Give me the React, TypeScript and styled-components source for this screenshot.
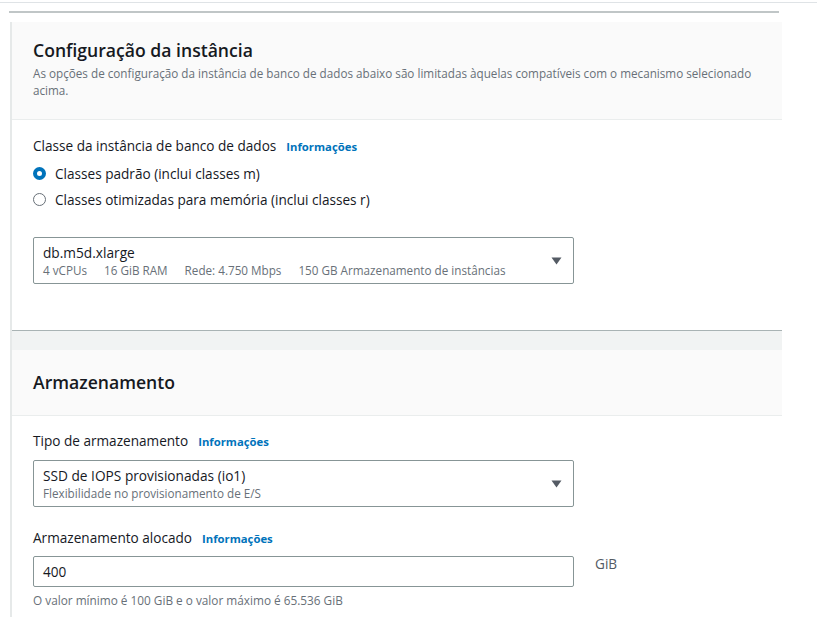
import React from "react";
import styled, { createGlobalStyle } from "styled-components";

const Global = createGlobalStyle`
  html, body { margin: 0; padding: 0; background: #ffffff; }
  body { font-family: "Open Sans", "Noto Sans", sans-serif; color: #16191f; }
  * { box-sizing: border-box; }
`;

const Page = styled.div`
  width: 817px;
  height: 617px;
  overflow: hidden;
  display: flex;
  flex-direction: column;
  & > * { flex-shrink: 0; }
`;

const TopRule = styled.div`
  margin-top: 2px;
  height: 1px;
  width: 100%;
  background: #dfe3e6;
`;

const PrevCardEdge = styled.div`
  margin: 8px 0 0 9px;
  width: 770px;
  height: 2px;
  background: #c0c6c7;
`;

const Column = styled.div`
  margin: 9px 0 0 10px;
  width: 772px;
  display: flex;
  flex-direction: column;
  border-left: 2px solid #e6e9e9;
  & > * { flex-shrink: 0; }
`;

const Card = styled.section<{ $closed?: boolean }>`
  display: flex;
  flex-direction: column;
  background: #ffffff;
  border-bottom: ${(p) => (p.$closed ? "1px solid #a9b3b4" : "none")};
`;

const CardHeader = styled.header<{ $pt: number; $pb: number }>`
  background: #fafafa;
  border-bottom: 1px solid #eaeded;
  padding: ${(p) => p.$pt}px 20px ${(p) => p.$pb}px 21px;
`;

const Title = styled.h2`
  margin: 0;
  font-size: 17.6px;
  line-height: 22px;
  font-weight: 600;
  color: #16191f;
`;

const Description = styled.p`
  margin: 4px 0 0;
  font-size: 11.7px;
  line-height: 17px;
  color: #687078;
  max-width: 735px;
`;

const CardBody = styled.div<{ $pt: number; $pb: number }>`
  padding: ${(p) => p.$pt}px 20px ${(p) => p.$pb}px 21px;
  display: flex;
  flex-direction: column;
`;

const Gap = styled.div`
  height: 19px;
  background: #f1f3f3;
`;

const FieldLabel = styled.div`
  display: flex;
  align-items: baseline;
  gap: 10px;
  font-size: 13.6px;
  line-height: 20px;
  color: #16191f;
`;

const InfoLink = styled.a`
  font-size: 11.3px;
  font-weight: 700;
  color: #0073bb;
  text-decoration: none;
`;

const RadioGroup = styled.div`
  display: flex;
  flex-direction: column;
  margin-top: 3px;
`;

const RadioRow = styled.label`
  display: flex;
  align-items: center;
  gap: 9px;
  height: 26px;
  font-size: 13.6px;
  color: #16191f;
`;

const RadioDot = styled.span<{ $checked?: boolean }>`
  width: 13px;
  height: 13px;
  border-radius: 50%;
  flex: none;
  border: ${(p) => (p.$checked ? "4px solid #0073bb" : "1px solid #687078")};
  background: #ffffff;
`;

const SelectBox = styled.div<{ $mt: number }>`
  margin-top: ${(p) => p.$mt}px;
  width: 541px;
  height: 47px;
  border: 1px solid #879596;
  border-radius: 2px;
  display: flex;
  align-items: center;
  padding: 0 10px 0 9px;
`;

const SelectText = styled.div`
  flex: 1;
  display: flex;
  flex-direction: column;
`;

const SelectMain = styled.div`
  font-size: 13.7px;
  line-height: 19px;
  color: #16191f;
`;

const SelectSub = styled.div`
  display: flex;
  gap: 17px;
  font-size: 11.7px;
  line-height: 17px;
  color: #687078;
`;

const Caret = styled.svg`
  width: 11px;
  height: 8px;
  margin-right: 1px;
  flex: none;
`;

const InputRow = styled.div`
  margin-top: 7px;
  display: flex;
  align-items: flex-start;
  gap: 21px;
`;

const TextInput = styled.div`
  width: 541px;
  height: 31px;
  border: 1px solid #879596;
  border-radius: 2px;
  padding: 0 9px;
  display: flex;
  align-items: center;
  font-size: 13.6px;
  color: #16191f;
`;

const Unit = styled.span`
  font-size: 13.6px;
  line-height: 16px;
  color: #545b64;
`;

const Hint = styled.div`
  margin-top: 5px;
  font-size: 11.8px;
  line-height: 16px;
  color: #687078;
`;

const Spacer = styled.div<{ $h: number }>`
  height: ${(p) => p.$h}px;
`;

const DownCaret = () => (
  <Caret viewBox="0 0 11 8">
    <path d="M0.5 0.5 H10.5 L5.5 7.5 Z" fill="#545b64" />
  </Caret>
);

export default function App() {
  return (
    <Page>
      <Global />
      <TopRule />
      <PrevCardEdge />
      <Column>
        <Card $closed>
          <CardHeader $pt={17} $pb={20}>
            <Title>Configuração da instância</Title>
            <Description>
              As opções de configuração da instância de banco de dados abaixo são limitadas àquelas
              compatíveis com o mecanismo selecionado acima.
            </Description>
          </CardHeader>
          <CardBody $pt={16} $pb={46}>
            <FieldLabel>
              Classe da instância de banco de dados <InfoLink>Informações</InfoLink>
            </FieldLabel>
            <RadioGroup>
              <RadioRow>
                <RadioDot $checked />
                Classes padrão (inclui classes m)
              </RadioRow>
              <RadioRow>
                <RadioDot />
                Classes otimizadas para memória (inclui classes r)
              </RadioRow>
            </RadioGroup>
            <SelectBox $mt={25}>
              <SelectText>
                <SelectMain>db.m5d.xlarge</SelectMain>
                <SelectSub>
                  <span>4 vCPUs</span>
                  <span>16 GiB RAM</span>
                  <span>Rede: 4.750 Mbps</span>
                  <span>150 GB Armazenamento de instâncias</span>
                </SelectSub>
              </SelectText>
              <DownCaret />
            </SelectBox>
          </CardBody>
        </Card>
        <Gap />
        <Card>
          <CardHeader $pt={21} $pb={22}>
            <Title>Armazenamento</Title>
          </CardHeader>
          <CardBody $pt={15} $pb={0}>
            <FieldLabel>
              Tipo de armazenamento <InfoLink>Informações</InfoLink>
            </FieldLabel>
            <SelectBox $mt={8}>
              <SelectText>
                <SelectMain>SSD de IOPS provisionadas (io1)</SelectMain>
                <SelectSub>
                  <span>Flexibilidade no provisionamento de E/S</span>
                </SelectSub>
              </SelectText>
              <DownCaret />
            </SelectBox>
            <Spacer $h={21} />
            <FieldLabel>
              Armazenamento alocado <InfoLink>Informações</InfoLink>
            </FieldLabel>
            <InputRow>
              <TextInput>400</TextInput>
              <Unit>GiB</Unit>
            </InputRow>
            <Hint>O valor mínimo é 100 GiB e o valor máximo é 65.536 GiB</Hint>
            <Spacer $h={40} />
          </CardBody>
        </Card>
      </Column>
    </Page>
  );
}
